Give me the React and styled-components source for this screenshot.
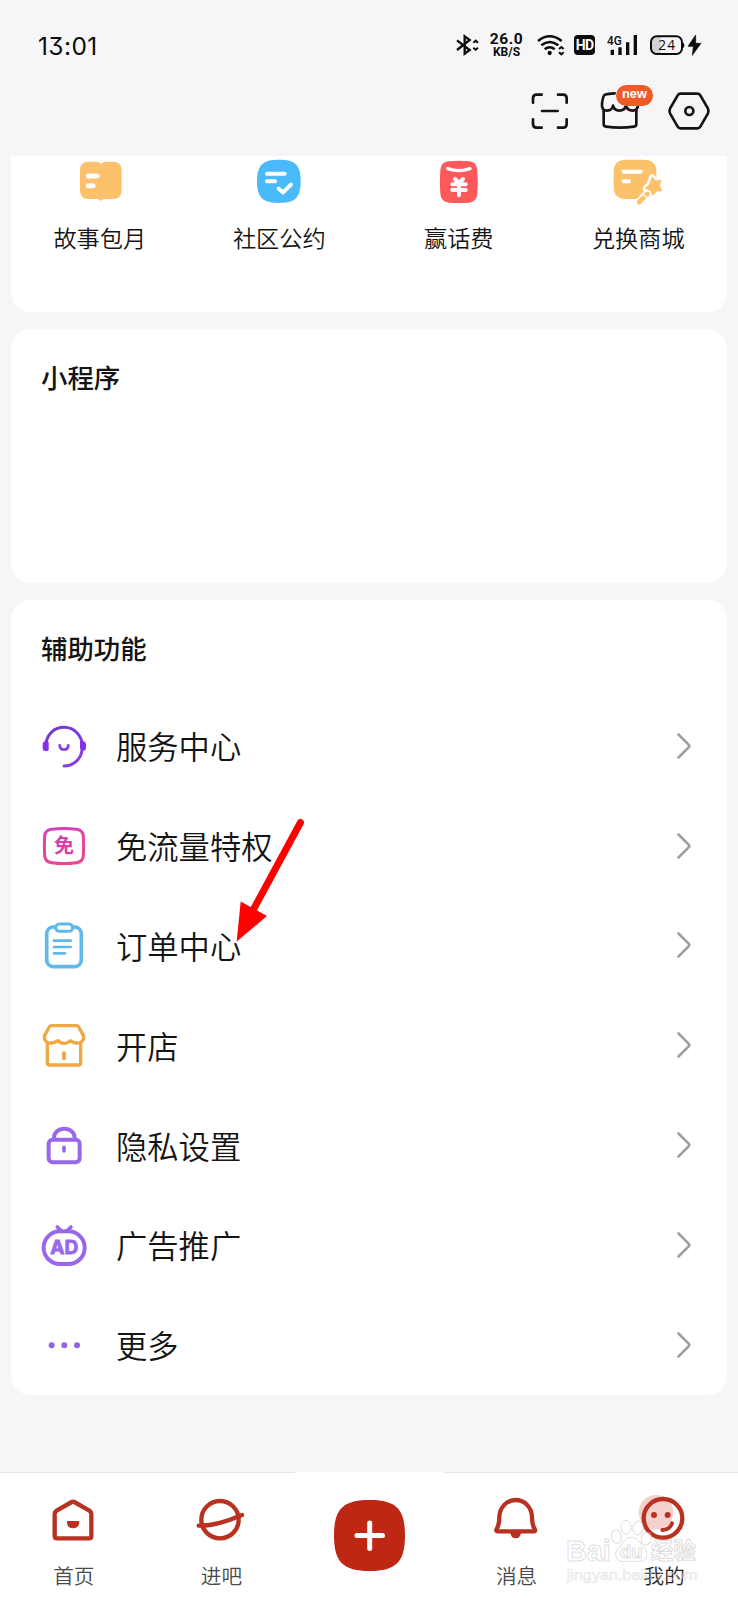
import React from 'react';
import styled, { createGlobalStyle } from 'styled-components';

const GlobalStyle = createGlobalStyle`
  * { box-sizing: border-box; }
  body {
    margin: 0;
    background: #f6f6f9;
    font-family: "Noto Sans CJK SC", "Noto Sans", sans-serif;
    color: #141414;
  }
`;

const Page = styled.div`
  position: relative;
  width: 738px;
  height: 1600px;
  overflow: hidden;
  display: flex;
  flex-direction: column;
  background: #f6f6f9;
`;

const StatusBar = styled.header`
  flex: none;
  height: 90px;
  padding: 0 36px 0 38px;
  display: flex;
  align-items: center;
  justify-content: space-between;
`;

const Clock = styled.span`
  padding-top: 1px;
  font: 400 24.5px/30px Inter, sans-serif;
  font-feature-settings: "cv09";
  letter-spacing: 0.4px;
  color: #0c0c0c;
`;

const StatusIcons = styled.div`
  display: flex;
  align-items: center;
`;

const StatusGlyph = styled.svg`
  display: block;
  flex: none;
  height: 24px;
  margin-left: ${p => p.$gap || 0}px;
  overflow: visible;
`;

const NetSpeed = styled.div`
  width: 34px;
  margin-left: 10px;
  padding-top: 1px;
  display: flex;
  flex-direction: column;
  align-items: center;
  font-family: Roboto, sans-serif;
  font-weight: 700;
  color: #0c0c0c;
`;

const Speed = styled.span`
  font-size: 15.5px;
  line-height: 13px;
  letter-spacing: 0.6px;
`;

const Unit = styled.span`
  font-size: 12px;
  line-height: 12px;
`;

const HdBadge = styled.span`
  width: 21px;
  height: 20px;
  margin-left: 9.5px;
  border-radius: 4px;
  background: #0c0c0c;
  color: #fff;
  font: 700 14px/20px Roboto, sans-serif;
  letter-spacing: -0.8px;
  text-align: center;
`;

const Toolbar = styled.div`
  flex: none;
  height: 66px;
  padding-right: 27px;
  display: flex;
  justify-content: flex-end;
`;

const Tool = styled.div`
  position: relative;
  width: ${p => p.$w}px;
  margin-left: ${p => p.$gap || 0}px;
  svg { display: block; height: 42px; width: 100%; }
`;

const NewBadge = styled.span`
  position: absolute;
  left: 17px;
  top: -5px;
  width: 37px;
  height: 21px;
  border-radius: 11px;
  background: #ee5b26;
  color: #fff;
  font: 700 12.8px/18px "Liberation Sans", sans-serif;
  text-align: center;
`;

const Content = styled.main`
  flex: 1;
  padding: 0 11px;
  display: flex;
  flex-direction: column;
  gap: 17px;
`;

const Card = styled.section`
  flex: none;
  height: ${p => p.$h}px;
  border-radius: ${p => (p.$cut ? '0 0 20px 20px' : '20px')};
  background: #fff;
`;

const Shortcuts = styled.div`
  display: flex;
  margin: 0 -1px;
`;

const Shortcut = styled.div`
  flex: 1;
  display: flex;
  flex-direction: column;
  align-items: center;
`;

const ShortcutLabel = styled.span`
  margin-top: 11px;
  font-size: 23.2px;
  line-height: 32px;
  font-weight: 350;
`;

const Icon = styled.svg`
  display: block;
  flex: none;
  width: 54px;
  height: 54px;
  fill: none;
  stroke-linecap: round;
  stroke-linejoin: round;
`;

const CardTitle = styled.h2`
  height: 96px;
  margin: 0;
  padding-left: 30px;
  font-size: 26.4px;
  line-height: 96px;
  font-weight: 500;
`;

const Row = styled.div`
  height: 99.8px;
  padding: 0 29px 0 26px;
  display: flex;
  align-items: center;
`;

const RowLabel = styled.span`
  flex: 1;
  margin-left: 25px;
  padding-top: 1px;
  font-size: 31.3px;
  line-height: 44px;
  font-weight: 350;
`;

const Chevron = styled.svg`
  display: block;
  width: 24px;
  height: 28px;
  fill: none;
  stroke: #9e9e9e;
  stroke-width: 2.6;
  stroke-linecap: round;
  stroke-linejoin: round;
`;

const TabBar = styled.nav`
  flex: none;
  height: 128px;
  display: flex;
  background: #fff;
`;

const Tab = styled.div`
  flex: 1;
  display: flex;
  flex-direction: column;
  align-items: center;
  border-top: 1px solid ${p => (p.$plain ? '#fff' : '#e6e6e9')};
  padding-top: ${p => (p.$plain ? 27 : 20)}px;
`;

const TabLabel = styled.span`
  margin-top: 13px;
  font-size: 20.6px;
  line-height: 30px;
  font-weight: 350;
  color: ${p => (p.$active ? '#222' : '#4a4a4a')};
`;

const AddButton = styled.svg`
  display: block;
  width: 71px;
  height: 71px;
  margin-left: 1px;
`;

const Pointer = styled.svg`
  position: absolute;
  left: 230px;
  top: 814px;
  width: 80px;
  height: 132px;
`;

const Watermark = styled.svg`
  position: absolute;
  left: 564px;
  top: 1516px;
  width: 136px;
  height: 70px;
`;

const art = {
  book: (
    <>
      <path fill="#fdc06b" d="M44 17H68Q77 17 80 21Q84 24 88 21Q91 17 100 17H120Q146 17 146 43V103Q146 129 120 129H96Q90 129 88 132Q84 137 80 132Q78 129 70 129H47Q21 129 21 103V43Q21 17 47 17Z" />
      <path stroke="#fff" strokeWidth="15" d="M46 60H72M46 89H60" />
    </>
  ),
  pact: (
    <>
      <path fill="#4bbafd" d="M81 11C130 11 146 27 146 76S130 141 81 141S15 125 15 76S32 11 81 11Z" />
      <path stroke="#fff" strokeWidth="12" d="M45 53H98M45 76H69M80 98L93 109L117 86" />
    </>
  ),
  redpack: (
    <>
      <path fill="#fd595a" d="M50 16Q81 13 112 16Q134 18 136 42Q139 78 136 114Q134 137 112 140Q81 142 50 140Q27 137 25 114Q22 78 25 42Q27 18 50 16Z" />
      <path stroke="#fff" strokeWidth="10" d="M47 38Q81 50 114 38" />
      <path stroke="#fff" strokeWidth="12" d="M69 69L81 81L93 69M61 85H101M61 102H101M81 83V118" />
    </>
  ),
  reward: (
    <>
      <path fill="#fdc06b" d="M45 11H99Q136 11 136 48V92L100 124Q93 129 84 129H45Q8 129 8 92V48Q8 11 45 11Z" />
      <path stroke="#fff" strokeWidth="12" d="M38 47H89M38 76H54" />
      <path stroke="#fff" strokeWidth="25" strokeLinecap="butt" d="M116 106L76 148" />
      <path fill="#fdc06b" stroke="#fff" strokeWidth="20" paintOrder="stroke" d="M124 65L133 77L149 74L143 89L151 103L136 104L126 116L120 102L105 97L117 86Z" />
      <path fill="#fdc06b" stroke="#fdc06b" strokeWidth="5" d="M124 65L133 77L149 74L143 89L151 103L136 104L126 116L120 102L105 97L117 86Z" />
      <path stroke="#fdc06b" strokeWidth="14" d="M109 114L84 139" />
      <path stroke="#fff" strokeWidth="4" d="M98 116L107 125" />
    </>
  ),
  service: (
    <>
      <defs>
        <linearGradient id="violet" x1="0" y1="0" x2="1" y2="1">
          <stop offset="0" stopColor="#6a3ccb" />
          <stop offset=".55" stopColor="#7c3ae0" />
          <stop offset="1" stopColor="#8b45dc" />
        </linearGradient>
      </defs>
      <path stroke="url(#violet)" strokeWidth="9" d="M27 72C32 43 53 25 81 25C113 25 136 51 136 83C136 116 113 141 81 141" />
      <path fill="#8430ee" d="M28 65L35 69V92Q35 96 28 96H25Q17 96 17 87V77Q17 67 28 65ZM132 65Q147 65 147 77V87Q147 96 133 96L129 88V69Z" />
      <path stroke="#8540df" strokeWidth="8.500" d="M68 79C70 96 92 96 94 79" />
    </>
  ),
  free: (
    <>
      <defs>
        <linearGradient id="pink" x1="0" y1="0" x2=".3" y2="1">
          <stop offset="0" stopColor="#cf43bd" />
          <stop offset="1" stopColor="#ef4492" />
        </linearGradient>
      </defs>
      <path stroke="url(#pink)" strokeWidth="9" d="M44 31Q81 26 118 31Q137 33 139 51Q141 81 139 111Q137 129 118 131Q81 136 44 131Q25 129 23 111Q21 81 23 51Q25 33 44 31Z" />
      <text x="81" y="103" textAnchor="middle" fontSize="60" fontWeight="700" fill="#d83fae">免</text>
    </>
  ),
  order: (
    <g stroke="#5fb8ea">
      <rect x="29" y="27" width="104" height="119" rx="20" strokeWidth="11" />
      <rect x="56" y="18" width="51" height="22" rx="11" strokeWidth="9" fill="#fff" />
      <path strokeWidth="8" d="M51 68H101M51 87H101M51 106H84" />
    </g>
  ),
  shop: (
    <g stroke="#f0a845" strokeWidth="10">
      <path d="M31 74V136Q31 141 36 141H126Q131 141 131 136V74" />
      <path fill="#fff" d="M43 23H119Q123 23 125 27L139 52Q142 61 136 69Q129 77 117 75Q107 74 100 68Q92 76 81 76Q70 76 63 68Q55 74 45 75Q33 77 26 69Q20 61 23 52L37 27Q39 23 43 23Z" />
      <path strokeWidth="12" d="M81 106V121" />
    </g>
  ),
  lock: (
    <g stroke="#9968ea" strokeWidth="12">
      <rect x="35" y="65" width="93" height="68" rx="12" />
      <path d="M51 62V59A31 27 0 0 1 113 59V62" />
      <path strokeWidth="11" d="M81 88V99" />
    </g>
  ),
  ad: (
    <>
      <rect x="20" y="40" width="123" height="98" rx="49" stroke="#9968ea" strokeWidth="12" />
      <path stroke="#9968ea" strokeWidth="11" d="M61 27L71 37M102 27L92 37" />
      <text x="82" y="109" textAnchor="middle" fontFamily="Inter, sans-serif" fontSize="56" fontWeight="700" fill="#9968ea" stroke="#9968ea" strokeWidth="2.500" textLength="84" lengthAdjust="spacingAndGlyphs">AD</text>
    </>
  ),
  more: (
    <g fill="#9363e2">
      <circle cx="44" cy="82" r="9" />
      <circle cx="82" cy="82" r="9" />
      <circle cx="120" cy="82" r="9" />
    </g>
  ),
  home: (
    <>
      <path stroke="#b93120" strokeWidth="13" d="M74 27Q78 25 82 27L127 53Q133 57 133 63V129Q133 136 126 136H30Q23 136 23 129V63Q23 57 29 53Z" />
      <path fill="#b93120" d="M60 84H97Q97 106 78 106T60 84Z" />
    </>
  ),
  forum: (
    <>
      <circle cx="78" cy="80" r="56" stroke="#b93120" strokeWidth="13" />
      <path stroke="#b93120" strokeWidth="13" d="M14 98Q65 100 144 66" />
    </>
  ),
  bell: (
    <>
      <path stroke="#b93120" strokeWidth="13" d="M77 21C50 21 29 43 28 72C28 92 26 99 19 110Q18 115 24 115H131Q137 115 135 110C128 99 126 92 126 72C125 43 104 21 77 21Z" />
      <path fill="#b93120" d="M61 119H93Q91 136 77 136T61 119Z" />
    </>
  ),
  me: (
    <>
      <circle cx="57" cy="58" r="52" fill="#f5d0cc" />
      <circle cx="78" cy="76" r="58" stroke="#b93120" strokeWidth="13" />
      <circle cx="51" cy="66" r="9" fill="#b93120" />
      <circle cx="92" cy="66" r="9" fill="#b93120" />
      <path stroke="#b93120" strokeWidth="12" d="M76 111Q98 110 105 91" />
    </>
  ),
};

const Glyph = ({ name }) => <Icon viewBox="0 0 162 162">{art[name]}</Icon>;

const shortcuts = [
  ['book', '故事包月'],
  ['pact', '社区公约'],
  ['redpack', '赢话费'],
  ['reward', '兑换商城'],
];

const rows = [
  ['service', '服务中心'],
  ['free', '免流量特权'],
  ['order', '订单中心'],
  ['shop', '开店'],
  ['lock', '隐私设置'],
  ['ad', '广告推广'],
  ['more', '更多'],
];

const NavTab = ({ icon, label, active }) => (
  <Tab>
    <Glyph name={icon} />
    <TabLabel $active={active}>{label}</TabLabel>
  </Tab>
);

export default function App() {
  return (
    <Page>
      <GlobalStyle />
      <StatusBar>
        <Clock>13:01</Clock>
        <StatusIcons>
          <StatusGlyph width="24" viewBox="0 0 72 72" fill="none" stroke="#0c0c0c" strokeWidth="7">
            <path d="M3 22L41 51L26 62V10L41 21L3 51" />
            <path strokeWidth="6" d="M52 29L59 23L66 29M52 44L59 50L66 44" />
          </StatusGlyph>
          <NetSpeed>
            <Speed>26.0</Speed>
            <Unit>KB/S</Unit>
          </NetSpeed>
          <StatusGlyph width="28" $gap={13} viewBox="0 0 84 72" fill="none" stroke="#0c0c0c" strokeWidth="7.500">
            <path d="M3 24Q38 -4 74 24M13 37Q38 17 64 37M23 49Q38 37 53 49" />
            <circle cx="38" cy="60" r="6.500" fill="#0c0c0c" stroke="none" />
            <path strokeWidth="6" d="M66 48L73 42L80 48M66 58L73 64L80 58" />
          </StatusGlyph>
          <HdBadge>HD</HdBadge>
          <StatusGlyph width="31" $gap={12} viewBox="0 0 93 72" fill="#0c0c0c">
            <text x="0" y="36" fontFamily="Roboto, sans-serif" fontSize="40" fontWeight="500" textLength="44" lengthAdjust="spacingAndGlyphs">4G</text>
            <path d="M11 50h10v16h-10zM34 43h10v23h-10zM57 28h10v38h-10zM80 6h10v60h-10z" />
          </StatusGlyph>
          <StatusGlyph width="52" $gap={12} viewBox="0 0 156 72" fill="none">
            <path d="M14 12H32V60H14Q4 58 4 36T14 12Z" fill="#d3d3d6" />
            <rect x="3" y="10" width="93" height="53" rx="17" stroke="#0c0c0c" strokeWidth="6" />
            <path d="M99 30Q105 36 99 44Z" fill="#0c0c0c" stroke="#0c0c0c" strokeWidth="3" />
            <text x="50" y="50" textAnchor="middle" fontFamily="Open Sans, sans-serif" fontSize="41" fill="#0c0c0c" textLength="50">24</text>
            <path d="M137 6L114 40H130L127 67L153 31H137Z" fill="#0c0c0c" stroke="#0c0c0c" strokeWidth="2" />
          </StatusGlyph>
        </StatusIcons>
      </StatusBar>

      <Toolbar>
        <Tool $w={42}>
          <svg viewBox="0 0 126 126" fill="none" stroke="#141414" strokeWidth="8" strokeLinecap="round">
            <path d="M12 38V25Q12 14 23 14H38M87 14H102Q113 14 113 25V38M113 88V102Q113 113 102 113H87M38 113H23Q12 113 12 102V88M39 63H86" />
          </svg>
        </Tool>
        <Tool $w={42} $gap={28}>
          <svg viewBox="0 0 126 126" fill="none" stroke="#141414" strokeWidth="8" strokeLinecap="round" strokeLinejoin="round">
            <path d="M14 61V102Q14 109 21 110Q63 116 105 110Q112 109 112 102V61" />
            <path d="M47 10Q27 11 18 14Q12 17 9 40Q7 61 23 62Q40 62 42 47Q46 62 61 62Q77 62 81 47Q85 62 101 62Q117 60 117 44" />
          </svg>
          <NewBadge>new</NewBadge>
        </Tool>
        <Tool $w={44} $gap={26}>
          <svg viewBox="0 0 132 126" fill="none" stroke="#141414" strokeWidth="8" strokeLinejoin="round">
            <path d="M41 11H91Q97 11 100 16L123 56Q126 63 123 70L100 110Q97 115 91 115H41Q35 115 32 110L9 70Q6 63 9 56L32 16Q35 11 41 11Z" />
            <circle cx="67" cy="63" r="12" />
          </svg>
        </Tool>
      </Toolbar>

      <Content>
        <Card $h={156} $cut>
          <Shortcuts>
            {shortcuts.map(([icon, label]) => (
              <Shortcut key={icon}>
                <Glyph name={icon} />
                <ShortcutLabel>{label}</ShortcutLabel>
              </Shortcut>
            ))}
          </Shortcuts>
        </Card>
        <Card $h={254}>
          <CardTitle>小程序</CardTitle>
        </Card>
        <Card $h={795}>
          <CardTitle>辅助功能</CardTitle>
          {rows.map(([icon, label]) => (
            <Row key={icon}>
              <Glyph name={icon} />
              <RowLabel>{label}</RowLabel>
              <Chevron viewBox="0 0 24 28">
                <path d="M4.5 2.5L14.6 12.6Q16 14 14.6 15.4L4.5 25.5" />
              </Chevron>
            </Row>
          ))}
        </Card>
      </Content>

      <TabBar>
        <NavTab icon="home" label="首页" />
        <NavTab icon="forum" label="进吧" />
        <Tab $plain>
          <AddButton viewBox="0 0 71 71">
            <path fill="#be2714" d="M35.5 0C62 0 71 9 71 35.500S62 71 35.500 71S0 62 0 35.500S9 0 35.500 0Z" />
            <path stroke="#fff" strokeWidth="5" strokeLinecap="round" d="M23 35.500H48.500M35.700 23V48.500" />
          </AddButton>
        </Tab>
        <NavTab icon="bell" label="消息" />
        <NavTab icon="me" label="我的" active />
      </TabBar>

      <Pointer viewBox="0 0 80 132">
        <path d="M70.500 8.500L22 98" stroke="#fe0000" strokeWidth="7" strokeLinecap="round" />
        <path d="M6.700 127.500L10.700 87.500L37 102Z" fill="#fe0000" />
      </Pointer>

      <Watermark viewBox="0 0 408 210" fill="#fff" fillOpacity=".5" stroke="#b4b4b4" strokeOpacity=".45" strokeWidth="3">
        <text x="6" y="136" fontFamily="Liberation Sans, sans-serif" fontWeight="700" fontSize="90" textLength="134" lengthAdjust="spacingAndGlyphs">Bai</text>
        <ellipse cx="157" cy="62" rx="15" ry="20" transform="rotate(-15 157 62)" />
        <ellipse cx="186" cy="34" rx="15" ry="21" />
        <ellipse cx="222" cy="36" rx="15" ry="21" transform="rotate(12 222 36)" />
        <ellipse cx="247" cy="68" rx="15" ry="20" transform="rotate(20 247 68)" />
        <path d="M202 64C222 64 226 82 240 95C257 112 248 138 222 137C208 135 197 135 183 137C154 139 147 112 164 95C178 82 182 64 202 64Z" />
        <text x="202" y="127" textAnchor="middle" fontFamily="Liberation Sans, sans-serif" fontWeight="700" fontSize="56">du</text>
        <text x="260" y="130" fontSize="68" fontWeight="700">经验</text>
        <text x="8" y="191" fontFamily="Liberation Sans, sans-serif" fontSize="42" strokeWidth="2" strokeOpacity=".35" fillOpacity=".35" textLength="392" lengthAdjust="spacingAndGlyphs">jingyan.baidu.com</text>
      </Watermark>
    </Page>
  );
}
